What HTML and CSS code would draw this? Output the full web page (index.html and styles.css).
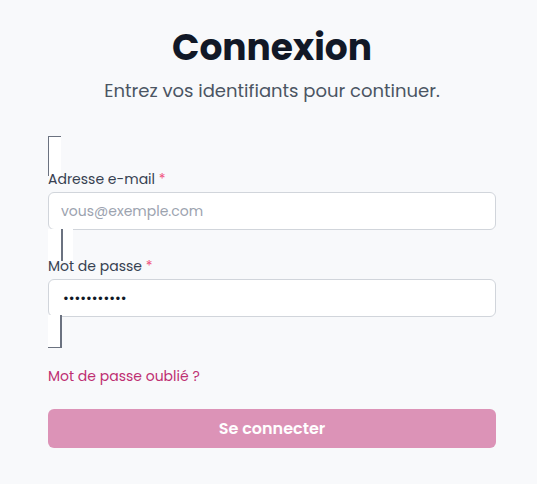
FILE: index.html
```html
<!DOCTYPE html>
<html lang="fr">
<head>
<meta charset="utf-8">
<title>Connexion</title>
<link rel="stylesheet" href="styles.css">
</head>
<body>
<main class="page">
  <header class="head">
    <h1 class="title">Connexion</h1>
    <p class="subtitle">Entrez vos identifiants pour continuer.</p>
  </header>
  <form class="form">
    <span class="deco deco-a"></span>
    <span class="deco deco-b"></span>
    <span class="deco deco-c"></span>
    <div class="field field-email">
      <label class="label" for="email">Adresse e-mail <span class="req">*</span></label>
      <input class="input" id="email" type="email" placeholder="vous@exemple.com">
    </div>
    <div class="field field-pass">
      <label class="label" for="pass">Mot de passe <span class="req">*</span></label>
      <input class="input input-pass" id="pass" type="password" value="motdepasse1">
    </div>
    <a class="forgot" href="#">Mot de passe oublié ?</a>
    <button class="submit" type="button">Se connecter</button>
  </form>
</main>
</body>
</html>
```
FILE: styles.css
```css
html, body {
  margin: 0;
  padding: 0;
  background: #f8f9fb;
}
body {
  font-family: "Poppins", "Noto Sans", "DejaVu Sans", sans-serif;
  color: #1f2937;
}
.page {
  width: 448px;
  margin-left: 48px;
  padding-top: 24px;
}
.head {
  text-align: center;
}
.title {
  margin: 0;
  font-size: 36px;
  font-weight: 700;
  line-height: 48px;
  color: #111827;
}
.subtitle {
  margin: 6px 0 0;
  font-size: 18px;
  line-height: 26px;
  color: #4b5563;
}
.form {
  position: relative;
  margin-top: 65px;
  display: flex;
  flex-direction: column;
}
.field {
  display: flex;
  flex-direction: column;
  gap: 3px;
}
.field-pass {
  margin-top: 26px;
}
.label {
  font-size: 14px;
  font-weight: 400;
  line-height: 20px;
  color: #374151;
  position: relative;
  z-index: 1;
}
.req {
  color: #f0527e;
}
.input {
  box-sizing: border-box;
  height: 38px;
  border: 1px solid #d1d5db;
  border-radius: 6px;
  background: #fff;
  padding: 0 12px;
  font-family: inherit;
  font-size: 14px;
  color: #111827;
  outline: none;
}
.input::placeholder {
  color: #9ca3af;
}
.input-pass {
  padding-left: 14px;
}
.forgot {
  margin-top: 49px;
  font-size: 14px;
  font-weight: 400;
  line-height: 20px;
  color: #be2f72;
  text-decoration: none;
  align-self: flex-start;
}
.submit {
  margin-top: 23px;
  height: 39px;
  border: none;
  border-radius: 6px;
  background: #dc93b7;
  color: #fff;
  font-family: inherit;
  font-size: 16px;
  font-weight: 600;
}
.deco {
  position: absolute;
  left: 0;
  background: #fff;
  box-sizing: border-box;
}
.deco-a {
  top: -33px;
  width: 13px;
  height: 40px;
  border-left: 1px solid #6b7280;
  border-top: 1px solid #6b7280;
}
.deco-b {
  top: 60px;
  width: 25px;
  height: 32px;
  background: linear-gradient(to right, #fff 13px, #6b7280 13px, #6b7280 15px, #fff 15px);
}
.deco-c {
  top: 146px;
  width: 14px;
  height: 33px;
  border-right: 2px solid #6b7280;
  border-bottom: 1px solid #6b7280;
}
```
